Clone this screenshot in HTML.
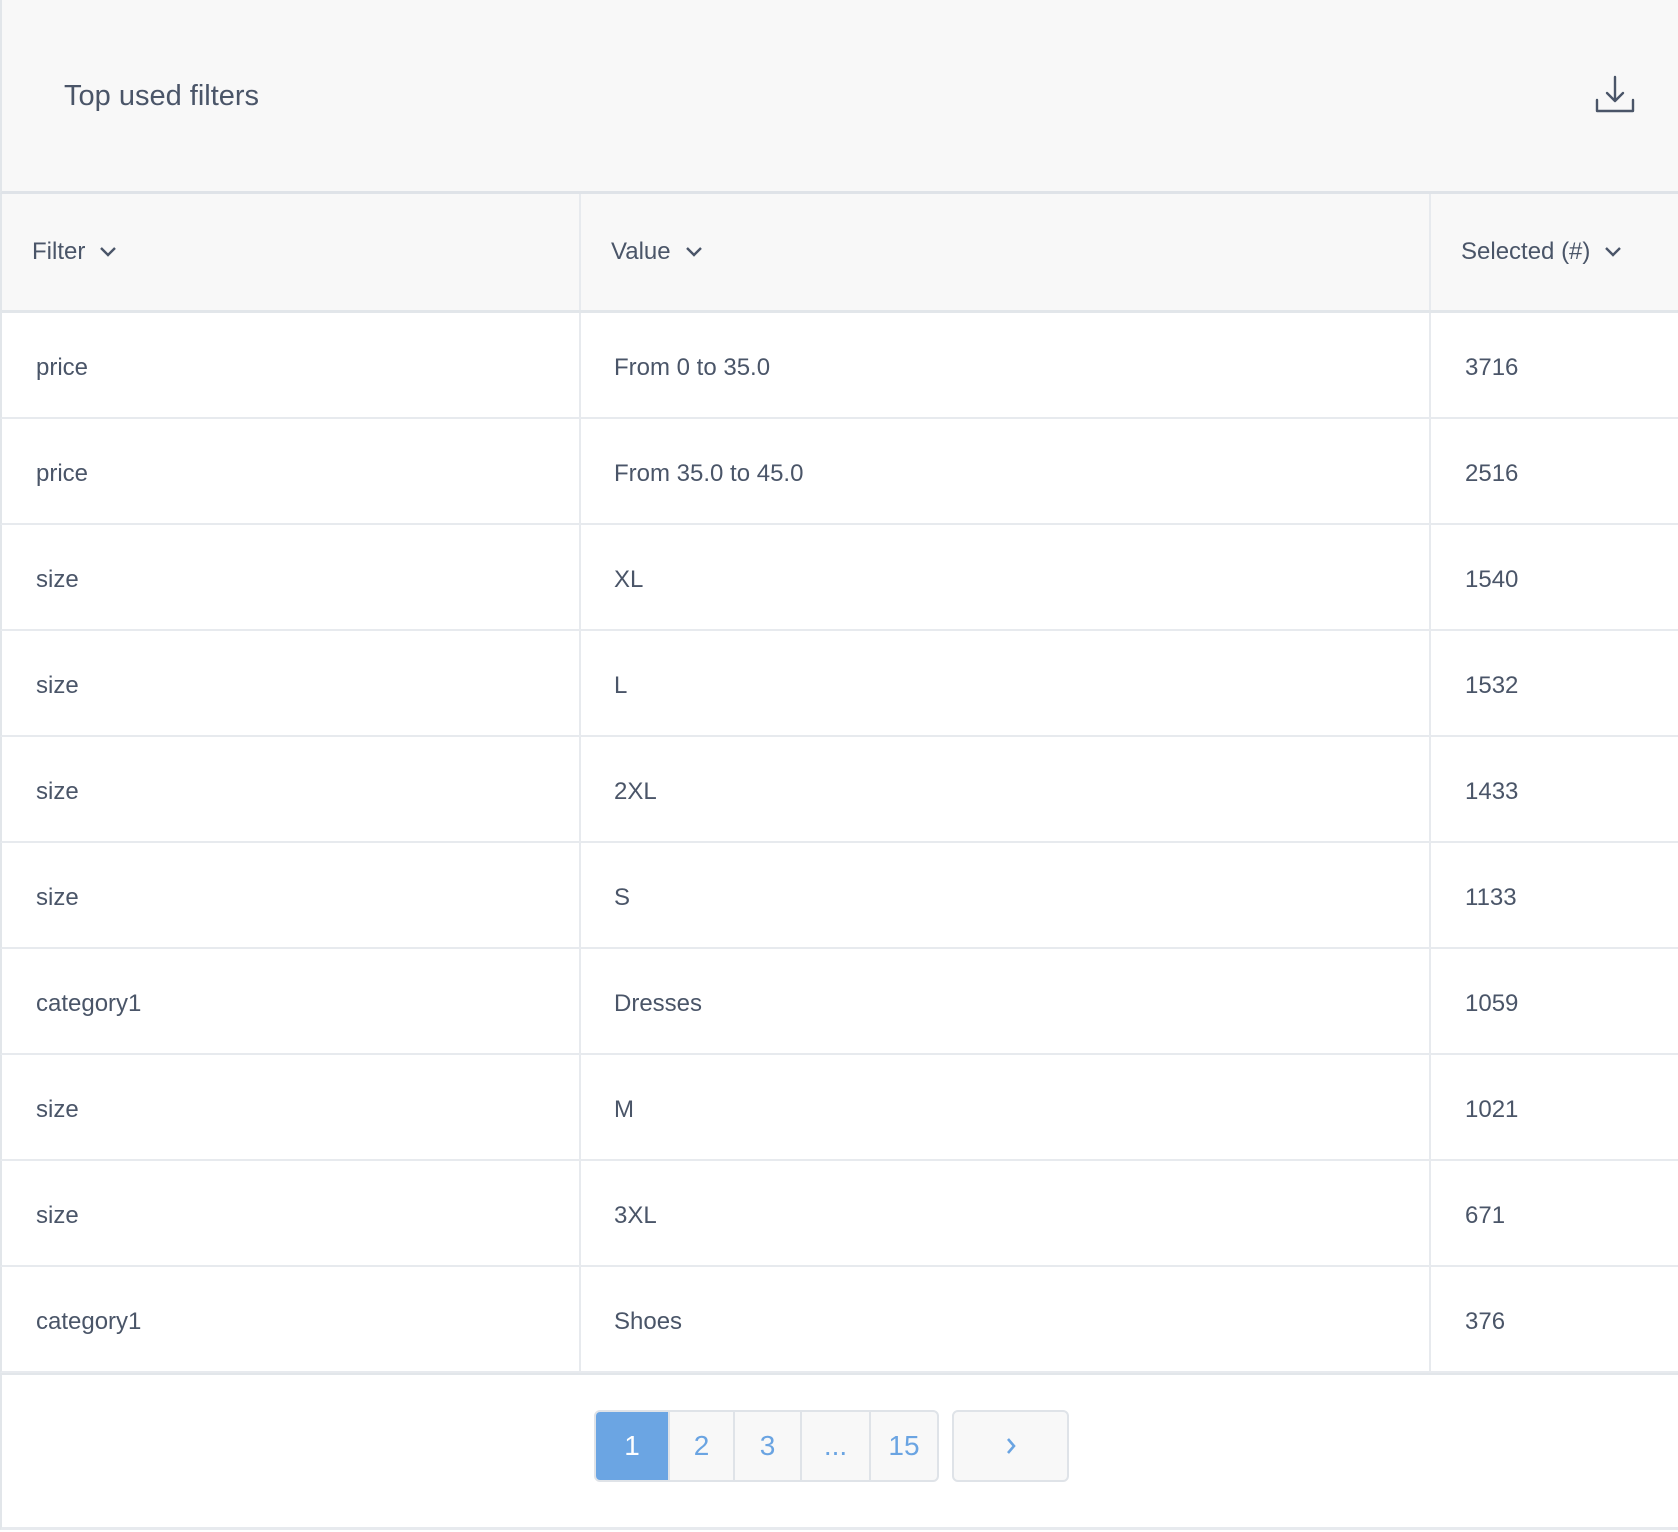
<!DOCTYPE html>
<html><head><meta charset="utf-8"><style>
*{box-sizing:border-box;margin:0;padding:0}
body{width:1678px;height:1532px;background:#fff;font-family:"Liberation Sans",sans-serif;color:#4a5568;position:relative;overflow:hidden}
.hdr{position:absolute;left:0;top:0;width:1678px;height:194px;background:#f8f8f8;border-left:2px solid #e2e6ea;border-bottom:3px solid #dfe3e8}
.title{position:absolute;left:62px;top:80px;font-size:29px;color:#4a5568}
.dl{position:absolute;left:1592px;top:74px}
.row{position:absolute;left:0;width:1678px;border-left:2px solid #e2e6ea;border-bottom:2px solid #e7eaee}
.c{position:absolute;top:0;height:100%;display:flex;align-items:center;font-size:24px;padding-top:6px}
.c2,.c3{border-left:2px solid #e7eaee}
.c1{left:0;width:579px;padding-left:34px}
.c2{left:577px;width:851px;padding-left:33px}
.c3{left:1427px;width:251px;padding-left:34px}
.th{background:#f8f8f8;top:194px;height:119px;border-bottom:3px solid #e2e6ea}
.th .c{padding-top:0}
.th .c1{padding-left:30px}.th .c2{padding-left:30px}.th .c3{padding-left:30px}
.chev{margin-left:14px}
.foot{position:absolute;left:0;top:1373px;width:1678px;height:157px;border-left:2px solid #e2e6ea;border-bottom:3px solid #e7eaee;border-top:2px solid #e2e6ea}
.pg{position:absolute;top:1410px;height:72px;display:flex;border:2px solid #dfe3e8;border-radius:6px;overflow:hidden;background:#f8f8f8}
.pg div{display:flex;align-items:center;justify-content:center;font-size:28px;color:#6aa4e2;border-left:2px solid #dfe3e8}
.pg div:first-child{border-left:none}
.pg .on{background:#6ba5e3;color:#fff}
</style></head><body>
<div class="hdr"><div class="title">Top used filters</div>
<svg class="dl" width="42" height="42" viewBox="0 0 42 42" fill="none" stroke="#4a5568" stroke-width="2.4" stroke-linecap="round" stroke-linejoin="round"><path d="M21 3V27M13 19L21 27L29 19"/><path d="M3 26V37H39V26"/></svg>
</div>
<div class="row th">
<div class="c c1">Filter<svg class="chev" width="18" height="12" viewBox="0 0 18 12"><path d="M2 2L9 9L16 2" stroke="#4a5568" stroke-width="2.4" fill="none"/></svg></div>
<div class="c c2">Value<svg class="chev" width="18" height="12" viewBox="0 0 18 12"><path d="M2 2L9 9L16 2" stroke="#4a5568" stroke-width="2.4" fill="none"/></svg></div>
<div class="c c3">Selected (#)<svg class="chev" width="18" height="12" viewBox="0 0 18 12"><path d="M2 2L9 9L16 2" stroke="#4a5568" stroke-width="2.4" fill="none"/></svg></div>
</div>
<div class="row" style="top:313px;height:106px"><div class="c c1">price</div><div class="c c2">From 0 to 35.0</div><div class="c c3">3716</div></div>
<div class="row" style="top:419px;height:106px"><div class="c c1">price</div><div class="c c2">From 35.0 to 45.0</div><div class="c c3">2516</div></div>
<div class="row" style="top:525px;height:106px"><div class="c c1">size</div><div class="c c2">XL</div><div class="c c3">1540</div></div>
<div class="row" style="top:631px;height:106px"><div class="c c1">size</div><div class="c c2">L</div><div class="c c3">1532</div></div>
<div class="row" style="top:737px;height:106px"><div class="c c1">size</div><div class="c c2">2XL</div><div class="c c3">1433</div></div>
<div class="row" style="top:843px;height:106px"><div class="c c1">size</div><div class="c c2">S</div><div class="c c3">1133</div></div>
<div class="row" style="top:949px;height:106px"><div class="c c1">category1</div><div class="c c2">Dresses</div><div class="c c3">1059</div></div>
<div class="row" style="top:1055px;height:106px"><div class="c c1">size</div><div class="c c2">M</div><div class="c c3">1021</div></div>
<div class="row" style="top:1161px;height:106px"><div class="c c1">size</div><div class="c c2">3XL</div><div class="c c3">671</div></div>
<div class="row" style="top:1267px;height:106px"><div class="c c1">category1</div><div class="c c2">Shoes</div><div class="c c3">376</div></div>
<div class="foot"></div>
<div class="pg" style="left:594px;width:345px">
<div class="on" style="width:72px">1</div><div style="width:65px">2</div><div style="width:67px">3</div><div style="width:69px">...</div><div style="width:68px">15</div>
</div>
<div class="pg" style="left:952px;width:117px"><div style="width:100%"><svg width="14" height="20" viewBox="0 0 14 20"><path d="M4 3L10 10L4 17" stroke="#6aa4e2" stroke-width="2.6" fill="none"/></svg></div></div>
</body></html>
